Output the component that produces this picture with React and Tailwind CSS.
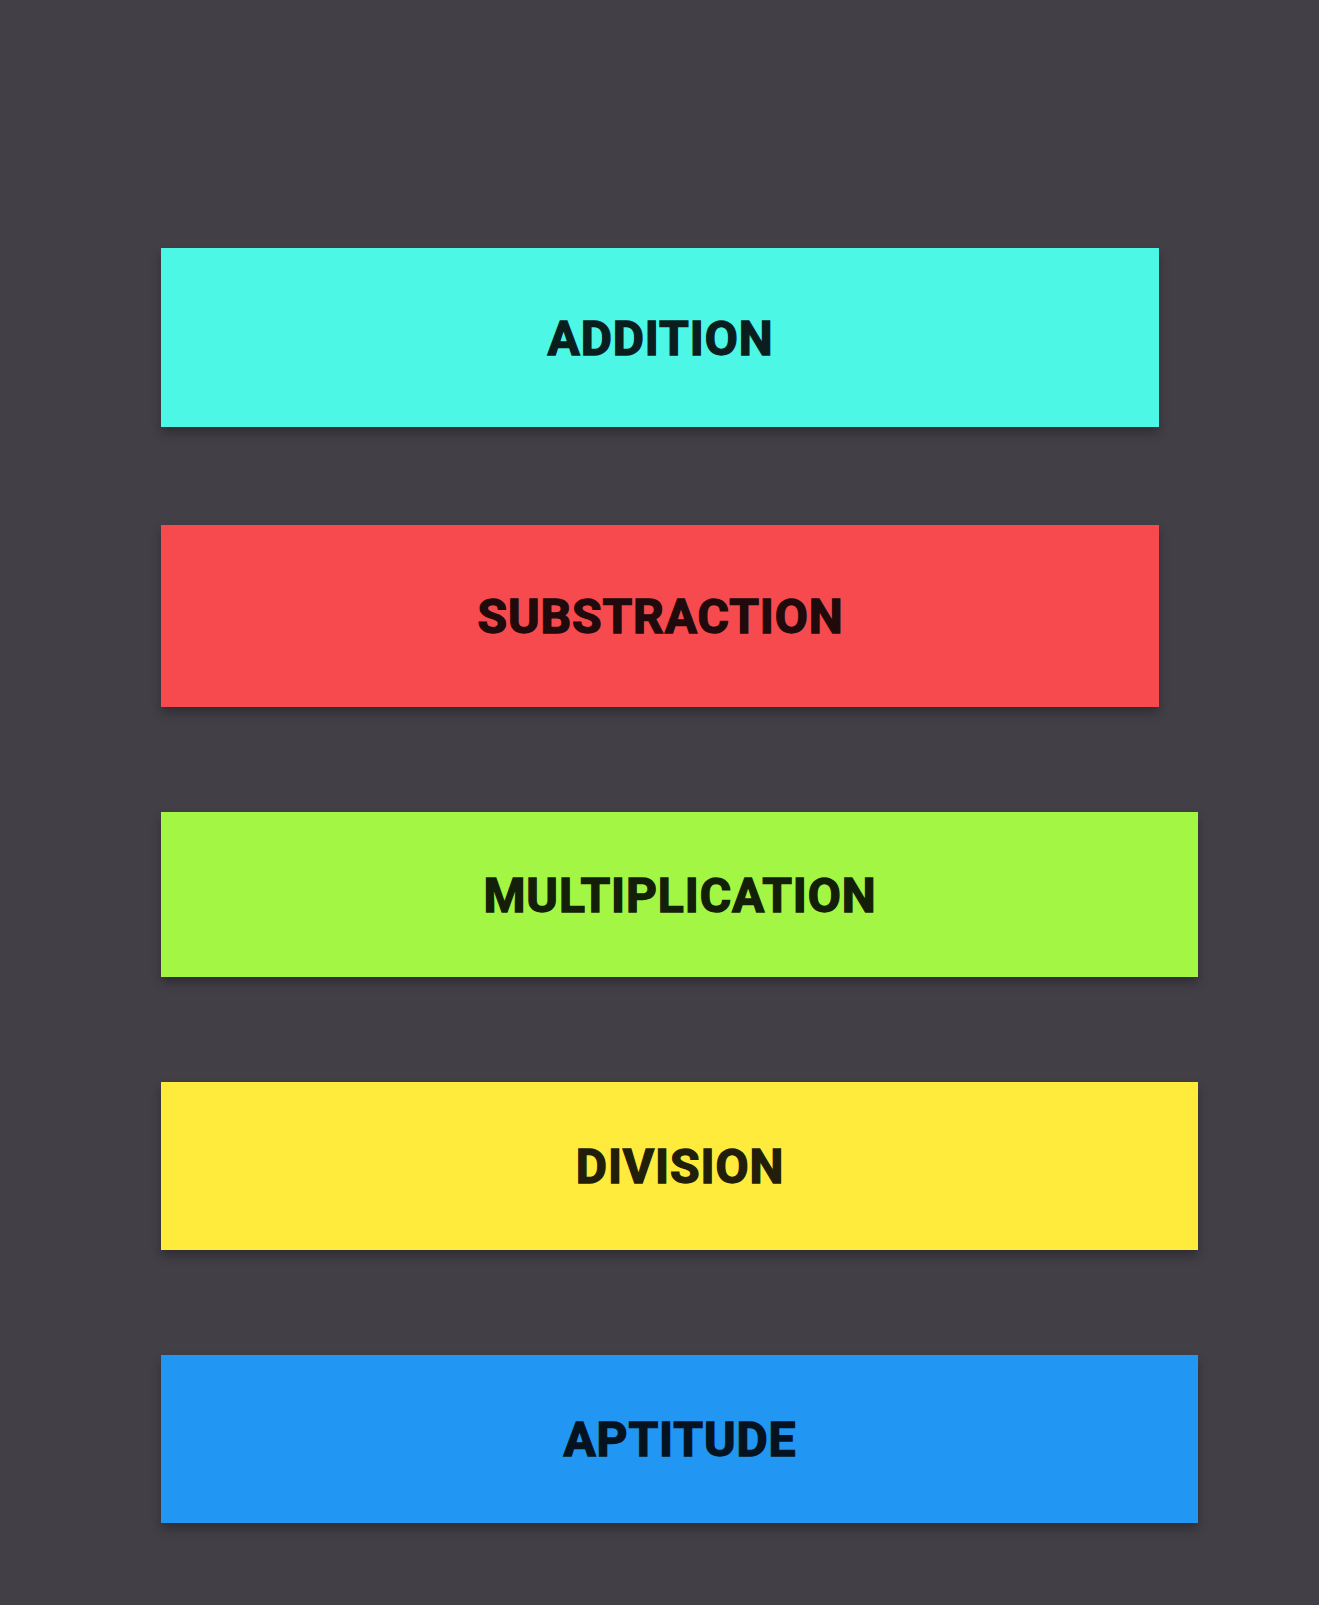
const TOPICS = [
  { name: "ADDITION", card: "bg-[#4cf7e6] text-[#0b1e1e] w-[998px] h-[179px]", gap: "" },
  { name: "SUBSTRACTION", card: "bg-[#f74a4f] text-[#200a0b] w-[998px] h-[182px]", gap: "mt-[98px]" },
  { name: "MULTIPLICATION", card: "bg-[#a3f744] text-[#141f09] w-[1037px] h-[165px]", gap: "mt-[105px]" },
  { name: "DIVISION", card: "bg-[#ffeb3b] text-[#211e0a] w-[1037px] h-[168px]", gap: "mt-[105px]" },
  { name: "APTITUDE", card: "bg-[#2196f3] text-[#051320] w-[1037px] h-[168px]", gap: "mt-[105px]" },
];

export default function App() {
  return (
    <div className="bg-[#433f47] min-h-[1605px] w-full pt-[248px] pl-[161px] font-['Roboto',sans-serif]">
      <div className="flex flex-col">
        {TOPICS.map((topic) => (
          <button
            key={topic.name}
            className={`${topic.card} ${topic.gap} flex items-center justify-center shadow-[0_6px_10px_rgba(0,0,0,0.3)] text-[48px] font-bold tracking-[0.9px] leading-none [-webkit-text-stroke:1.4px_currentColor]`}
          >
            <span className="pl-[1px] pt-[2px]">{topic.name}</span>
          </button>
        ))}
      </div>
    </div>
  );
}
